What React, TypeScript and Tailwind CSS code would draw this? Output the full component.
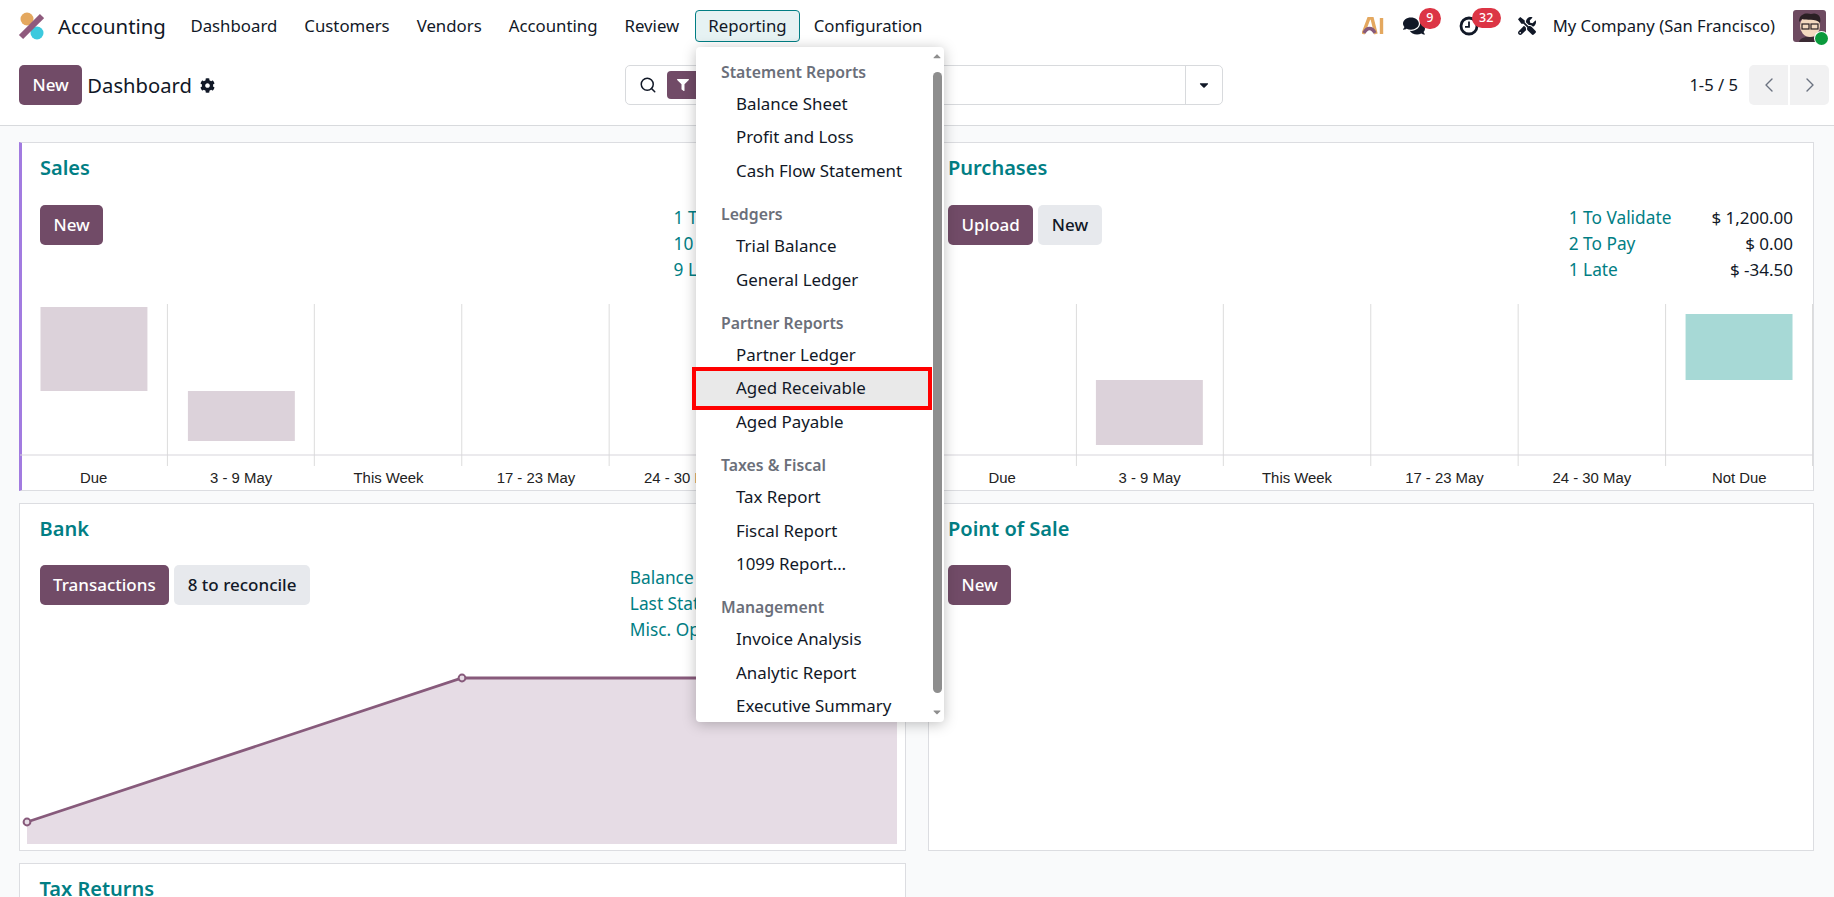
import { ChevronLeft, ChevronRight, Search } from "lucide-react";
import { FaCaretDown, FaCaretUp, FaCog, FaComments, FaFilter, FaTools } from "react-icons/fa";

const navItems = ["Dashboard", "Customers", "Vendors", "Accounting", "Review"];

const menuGroups = [
  { title: "Statement Reports", items: ["Balance Sheet", "Profit and Loss", "Cash Flow Statement"] },
  { title: "Ledgers", items: ["Trial Balance", "General Ledger"] },
  { title: "Partner Reports", items: ["Partner Ledger", "Aged Receivable", "Aged Payable"] },
  { title: "Taxes & Fiscal", items: ["Tax Report", "Fiscal Report", "1099 Report…"] },
  { title: "Management", items: ["Invoice Analysis", "Analytic Report", "Executive Summary"] },
];

const chartLabels = ["Due", "3 - 9 May", "This Week", "17 - 23 May", "24 - 30 May", "Not Due"];

const Logo = () => (
  <svg width="26" height="28" viewBox="0 0 26 28" className="shrink-0">
    <circle cx="9" cy="7" r="6.5" fill="#e4a85f" />
    <circle cx="19" cy="21" r="6.5" fill="#3cc9de" />
    <path d="M3 25 L24 4" stroke="#8f5a7d" strokeWidth="6" />
  </svg>
);

const AiMark = () => (
  <svg width="22" height="18" viewBox="0 0 22 18">
    <path d="M1 17 L7 1 H10 L14 17" fill="none" stroke="#e4a85f" strokeWidth="3.4" />
    <path d="M2 16 C5 10 10 10 13 16" fill="none" stroke="#875a7b" strokeWidth="3.4" />
    <path d="M19.5 1 V17" stroke="#e4a85f" strokeWidth="3.4" />
  </svg>
);

const ClockIcon = () => (
  <svg width="20" height="20" viewBox="0 0 20 20" className="block">
    <circle cx="10" cy="10" r="8" fill="none" stroke="#111827" strokeWidth="2.8" />
    <path d="M10 5.5 V10.8 H6" fill="none" stroke="#111827" strokeWidth="1.8" />
  </svg>
);

const Avatar = () => (
  <div className="relative h-[32px] w-[33px]">
    <svg width="33" height="32" viewBox="0 0 33 32" className="rounded-[3px]">
      <rect width="33" height="32" fill="#6d4a60" />
      <path d="M6 32 C7 25 26 25 27 32 Z" fill="#3a2a33" />
      <ellipse cx="17" cy="16" rx="10" ry="11" fill="#f3d9bf" />
      <path d="M6 12 C6 3 14 3 18 4 C24 2 29 6 27 13 C23 8 13 11 9 9 Z" fill="#2a2024" />
      <rect x="9" y="14" width="7" height="5" fill="none" stroke="#2a2024" strokeWidth="1.2" />
      <rect x="18" y="14" width="7" height="5" fill="none" stroke="#2a2024" strokeWidth="1.2" />
    </svg>
    <span className="absolute bottom-[-3px] right-[-2px] h-[13px] w-[13px] rounded-full bg-[#0a9a3c] ring-1 ring-white" />
  </div>
);

const Button = ({ label, primary = false }: { label: string; primary?: boolean }) => (
  <button
    className={`h-[40px] rounded-[5px] px-[13.5px] text-[17px] font-medium ${
      primary ? "bg-[#714b67] text-white" : "bg-[#e7e9ed] text-[#111827]"
    }`}
  >
    {label}
  </button>
);

const Stats = ({ rows, className }: { rows: [string, string][]; className: string }) => (
  <div className={`grid grid-cols-[auto_auto] content-start gap-x-[40px] text-[17px] leading-[26px] ${className}`}>
    {rows.map(([label, value]) => (
      <div key={label} className="contents">
        <span className="text-[17.3px] text-[#017e84]">{label}</span>
        <span className="text-right text-[#111827]">{value}</span>
      </div>
    ))}
  </div>
);

const BarChart = ({ bars, className = "" }: { bars: { x: number; y: number; h: number; fill: string }[]; className?: string }) => (
  <div className={`mt-auto ${className}`}>
    <svg width="100%" height="162" viewBox="0 0 885 162" preserveAspectRatio="none" className="block">
      {[147.5, 294.5, 442, 589.5, 737, 884].map((x) => (
        <path key={x} d={`M${x} 0 V162`} stroke="#dcdcdc" strokeWidth="1" />
      ))}
      <path d="M0 151 H885" stroke="#d8d6dc" strokeWidth="1.2" />
      {bars.map((b) => (
        <rect key={b.x} x={b.x} y={b.y} width="107" height={b.h} fill={b.fill} />
      ))}
    </svg>
    <div className="grid grid-cols-6 pb-[3px] pt-[4px]">
      {chartLabels.map((l) => (
        <span key={l} className="text-center font-['Liberation_Sans',sans-serif] text-[14.9px] leading-[17px] text-[#222]">
          {l}
        </span>
      ))}
    </div>
  </div>
);

const Card = ({ title, accent = false, children }: { title: string; accent?: boolean; children?: React.ReactNode }) => (
  <section
    className={`flex h-[348.5px] flex-col border border-[#dcdde1] bg-white ${accent ? "border-l-[3px] border-l-[#a27be0]" : ""}`}
  >
    <h2 className={`pb-[23.5px] pt-[12px] text-[20px] font-semibold leading-[26px] text-[#017e84] ${accent ? "pl-[18px]" : "pl-[19.5px]"}`}>
      {title}
    </h2>
    {children}
  </section>
);

const ReportingMenu = () => (
  <div className="absolute left-[696px] top-[47px] z-20 flex h-[675px] w-[248px] rounded-[4px] bg-white shadow-[0_2px_14px_rgba(0,0,0,0.25)]">
    <div className="h-full flex-1 pt-[11px]">
      {menuGroups.map((group) => (
        <div key={group.title} className="pb-[13px]">
          <div className="pl-[25px] text-[15.8px] font-semibold leading-[29px] text-[#6b6f7a]">{group.title}</div>
          {group.items.map((item) =>
            item === "Aged Receivable" ? (
              <div
                key={item}
                className="relative z-10 my-[-4.8px] ml-[-4px] flex h-[43px] items-center border-4 border-[#ff0000] bg-[#e9e9e9] pl-[40px] text-[16.9px] text-[#111827]"
              >
                {item}
              </div>
            ) : (
              <div key={item} className="flex h-[33.4px] items-center pl-[40px] text-[16.9px] text-[#111827]">
                {item}
              </div>
            )
          )}
        </div>
      ))}
    </div>
    <div className="flex w-[12px] flex-col items-center pr-[2px]">
      <FaCaretUp className="mt-[3px] text-[#8e8e8e]" size={12} />
      <div className="mt-[10px] h-[621px] w-[9px] shrink-0 rounded-full bg-[#8e8e8e]" />
      <FaCaretDown className="mt-[13px] text-[#8e8e8e]" size={12} />
    </div>
  </div>
);

export default function App() {
  return (
    <div className="relative flex h-[897px] flex-col overflow-hidden bg-[#f9fafb] font-['Noto_Sans',sans-serif] text-[#111827]">
      <nav className="flex h-[46px] shrink-0 items-center bg-white pl-[18px] pr-[8px] pt-[6px]">
        <Logo />
        <span className="ml-[14px] mr-[11px] text-[20.4px]">Accounting</span>
        {navItems.map((item) => (
          <span key={item} className="px-[13.5px] text-[16.8px]">
            {item}
          </span>
        ))}
        <span className="ml-[2.5px] flex h-[32px] items-center rounded-[4px] border border-[#017e84] bg-[#e6f2f3] px-[12px] text-[16.8px]">
          Reporting
        </span>
        <span className="px-[14px] text-[16.8px]">Configuration</span>
        <div className="ml-auto flex items-center">
          <AiMark />
          <div className="relative ml-[19px] mr-[34px]">
            <FaComments size={22} className="text-[#111827]" />
            <span className="absolute right-[-16px] top-[-7px] flex h-[21px] w-[22px] items-center justify-center rounded-full bg-[#dc3545] text-[12.5px] font-medium text-white">
              9
            </span>
          </div>
          <div className="relative mr-[39px]">
            <ClockIcon />
            <span className="absolute left-[13px] top-[-8px] flex h-[20px] w-[29px] items-center justify-center rounded-full bg-[#dc3545] text-[12.5px] font-medium text-white">
              32
            </span>
          </div>
          <FaTools size={18} className="text-[#111827]" />
          <span className="ml-[17px] mr-[18px] text-[16.6px]">My Company (San Francisco)</span>
          <Avatar />
        </div>
      </nav>

      <header className="flex h-[80px] shrink-0 items-start border-b border-[#d8dadd] bg-white pl-[19px] pr-[5px] pt-[19px]">
        <div className="flex w-[606px] items-start">
          <Button label="New" primary />
          <span className="ml-[5px] text-[20.2px] leading-[40px]">Dashboard</span>
          <FaCog size={15} className="ml-[8px] mt-[13px]" />
        </div>
        <div className="flex h-[40px] w-[598px] items-center rounded-[5px] border border-[#d8dadd] bg-white pl-[13px]">
          <Search size={18} className="text-[#111827]" />
          <span className="ml-[10px] flex h-[28px] w-[40px] items-center rounded-[4px] bg-[#714b67] pl-[10px]">
            <FaFilter size={12} className="text-white" />
          </span>
          <span className="ml-auto flex h-full w-[37px] items-center justify-center border-l border-[#d8dadd]">
            <FaCaretDown size={14} />
          </span>
        </div>
        <span className="ml-auto mr-[11px] text-[16.6px] leading-[40px]">1-5 / 5</span>
        <div className="flex gap-[2px]">
          <span className="flex h-[40px] w-[39px] items-center justify-center rounded-l-[5px] bg-[#f1f1f2]">
            <ChevronLeft size={24} strokeWidth={1.4} className="text-[#6b7280]" />
          </span>
          <span className="flex h-[40px] w-[39px] items-center justify-center rounded-r-[5px] bg-[#f1f1f2]">
            <ChevronRight size={24} strokeWidth={1.4} className="text-[#6b7280]" />
          </span>
        </div>
      </header>

      <main className="grid grid-cols-2 content-start gap-x-[22px] gap-y-[12px] pl-[19px] pr-[20px] pt-[16px]">
        <Card title="Sales" accent>
          <div className="flex justify-between pl-[18px] pr-[20px]">
            <Button label="New" primary />
            <Stats
              className="mr-[-23px]"
              rows={[
                ["1 To Validate", "$ 3,450.00"],
                ["10 Unpaid", "$ 12,800.00"],
                ["9 Late", "$ 9,600.00"],
              ]}
            />
          </div>
          <BarChart
            className="ml-[-2px]"
            bars={[
              { x: 20.5, y: 3, h: 84, fill: "#dcd2da" },
              { x: 168, y: 87, h: 50, fill: "#dcd2da" },
            ]}
          />
        </Card>
        <Card title="Purchases">
          <div className="flex justify-between pl-[19.5px] pr-[20px]">
            <div className="flex gap-[5px]">
              <Button label="Upload" primary />
              <Button label="New" />
            </div>
            <Stats
              className=""
              rows={[
                ["1 To Validate", "$ 1,200.00"],
                ["2 To Pay", "$ 0.00"],
                ["1 Late", "$ -34.50"],
              ]}
            />
          </div>
          <BarChart
            bars={[
              { x: 167, y: 76, h: 65, fill: "#dcd2da" },
              { x: 757, y: 10, h: 66, fill: "#a7d9d6" },
            ]}
          />
        </Card>
        <Card title="Bank">
          <div className="flex justify-between pl-[19.5px] pr-[20px]">
            <div className="flex gap-[5px]">
              <Button label="Transactions" primary />
              <Button label="8 to reconcile" />
            </div>
            <Stats
              className="mr-[-13px]"
              rows={[
                ["Balance", "$ 11,750.00"],
                ["Last Statement", "$ 10,900.00"],
                ["Misc. Operations", "$ 850.00"],
              ]}
            />
          </div>
          <div className="mt-auto pb-[6px] pl-[7px] pr-[8px]">
            <svg width="870" height="175" viewBox="0 0 870 175" className="block overflow-visible">
              <path d="M0 153 L435 9 H870 V175 H0 Z" fill="#e6dce5" />
              <path d="M0 153 L435 9 H870" fill="none" stroke="#875a7b" strokeWidth="2.8" />
              <circle cx="0" cy="153" r="3.4" fill="#e6dce5" stroke="#875a7b" strokeWidth="2" />
              <circle cx="435" cy="9" r="3.4" fill="#e6dce5" stroke="#875a7b" strokeWidth="2" />
            </svg>
          </div>
        </Card>
        <Card title="Point of Sale">
          <div className="pl-[19.5px]">
            <Button label="New" primary />
          </div>
        </Card>
        <Card title="Tax Returns" />
      </main>

      <ReportingMenu />
    </div>
  );
}
